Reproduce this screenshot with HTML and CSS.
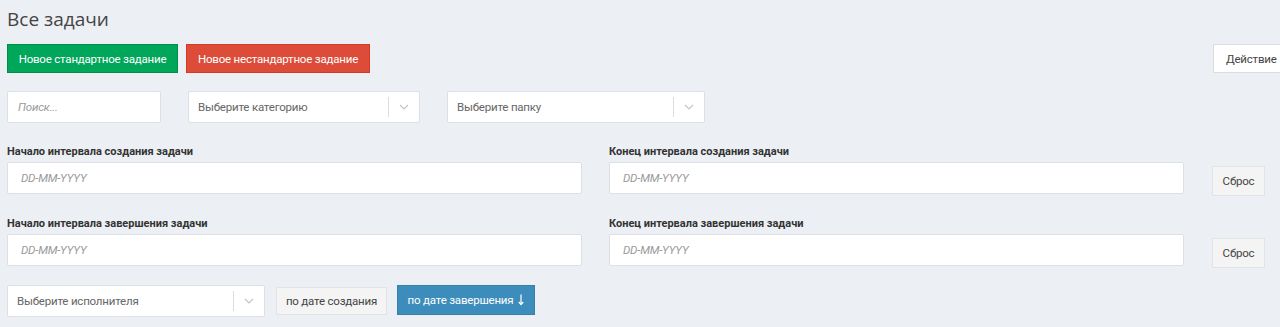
FILE: index.html
```html
<!DOCTYPE html>
<html lang="ru">
<head>
<meta charset="utf-8">
<title>Все задачи</title>
<link rel="stylesheet" href="styles.css">
</head>
<body>
<div class="page">
  <h1 class="title">Все задачи</h1>
  <div class="toolbar">
    <button class="btn btn-green">Новое стандартное задание</button>
    <button class="btn btn-red">Новое нестандартное задание</button>
    <button class="btn btn-action">Действие</button>
  </div>
  <div class="filters">
    <div class="field search"><span class="ph italic">Поиск...</span></div>
    <div class="field select cat"><span class="ph">Выберите категорию</span><span class="sep"></span><svg class="chev" width="10" height="6" viewBox="0 0 10 6"><path d="M1 1l4 4 4-4" fill="none" stroke="#c4c4c4" stroke-width="1.2"/></svg></div>
    <div class="field select folder"><span class="ph">Выберите папку</span><span class="sep"></span><svg class="chev" width="10" height="6" viewBox="0 0 10 6"><path d="M1 1l4 4 4-4" fill="none" stroke="#c4c4c4" stroke-width="1.2"/></svg></div>
  </div>
  <div class="daterow first">
    <div class="col">
      <label class="lbl">Начало интервала создания задачи</label>
      <div class="field date"><span class="ph italic">DD-MM-YYYY</span></div>
    </div>
    <div class="col">
      <label class="lbl">Конец интервала создания задачи</label>
      <div class="field date"><span class="ph italic">DD-MM-YYYY</span></div>
    </div>
    <button class="btn btn-default reset">Сброс</button>
  </div>
  <div class="daterow second">
    <div class="col">
      <label class="lbl">Начало интервала завершения задачи</label>
      <div class="field date"><span class="ph italic">DD-MM-YYYY</span></div>
    </div>
    <div class="col">
      <label class="lbl">Конец интервала завершения задачи</label>
      <div class="field date"><span class="ph italic">DD-MM-YYYY</span></div>
    </div>
    <button class="btn btn-default reset">Сброс</button>
  </div>
  <div class="bottom">
    <div class="field select exec"><span class="ph">Выберите исполнителя</span><span class="sep"></span><svg class="chev" width="10" height="6" viewBox="0 0 10 6"><path d="M1 1l4 4 4-4" fill="none" stroke="#c4c4c4" stroke-width="1.2"/></svg></div>
    <button class="btn btn-default sort">по дате создания</button>
    <button class="btn btn-blue sort-active">по дате завершения <svg width="6" height="12" viewBox="0 0 6 12"><path d="M3 0.5v10M0.8 8L3 10.6 5.2 8" fill="none" stroke="#fff" stroke-width="1.2"/></svg></button>
  </div>
</div>
</body>
</html>
```
FILE: styles.css
```css
* { box-sizing: border-box; }
html, body { margin: 0; padding: 0; }
body {
  background: #ecf0f5;
  font-family: Roboto, "Liberation Sans", sans-serif;
  color: #333;
  overflow: hidden;
  width: 1280px;
  height: 327px;
}
.page { padding: 0 7px; }
.title {
  margin: 0;
  padding-top: 7px;
  height: 44px;
  font-weight: normal;
  font-size: 19px;
  line-height: 24px;
  color: #444;
  font-family: "Open Sans", "Liberation Sans", sans-serif;
}
.toolbar { display: flex; gap: 8px; height: 29px; }
.btn {
  font-family: inherit;
  font-size: 11.5px;
  letter-spacing: -0.2px;
  white-space: nowrap;
  border: 1px solid transparent;
  border-radius: 0;
  padding: 0;
  cursor: pointer;
  display: inline-flex;
  align-items: center;
  justify-content: center;
}
.btn-green { background: #00a65a; color: #fff; width: 171px; border-color: #008d4c; }
.btn-red { background: #dd4b39; color: #fff; width: 184px; border-color: #d73925; }
.btn-action {
  margin-left: auto;
  margin-right: -15px;
  width: 75px;
  background: #fff;
  border-color: #ddd;
  color: #444;
  justify-content: flex-start;
  padding-left: 12px;
}
.filters { display: flex; gap: 27px; margin-top: 18px; height: 32px; }
.field {
  background: #fff;
  border: 1px solid #dcdfe3;
  border-radius: 2px;
  height: 32px;
  display: flex;
  align-items: center;
  font-size: 11.5px;
  letter-spacing: -0.2px;
}
.ph { color: #777; padding-left: 11px; flex: 1; white-space: nowrap; }
.italic { font-style: italic; color: #9a9a9a; }
.search { width: 154px; }
.search .ph { padding-left: 10px; }
.cat { width: 232px; }
.folder { width: 258px; }
.exec { width: 258px; }
.select .ph { padding-left: 9px; color: #666; }
.sep { width: 1px; height: 20px; background: #ddd; }
.chev { margin: 0 10px 0 10px; }
.daterow { display: flex; gap: 27px; align-items: flex-end; }
.daterow.first { margin-top: 21px; }
.daterow.second { margin-top: 22px; }
.col { width: 575px; display: flex; flex-direction: column; }
.lbl { font-weight: bold; font-size: 11px; line-height: 16px; margin-bottom: 2px; color: #333; white-space: nowrap; }
.date .ph { padding-left: 13px; }
.btn-default { background: #f4f4f4; border-color: #e3e3e3; color: #444; }
.reset { width: 53px; height: 30px; margin-left: 1px; margin-bottom: -2px; }
.bottom { display: flex; align-items: center; gap: 11px; margin-top: 19px; }
.sort { width: 111px; height: 28px; }
.sort-active { width: 138px; height: 30px; margin-left: -1px; margin-top: -2px; gap: 5px; }
.btn-blue { background: #3c8dbc; border-color: #367fa9; color: #fff; }
```
